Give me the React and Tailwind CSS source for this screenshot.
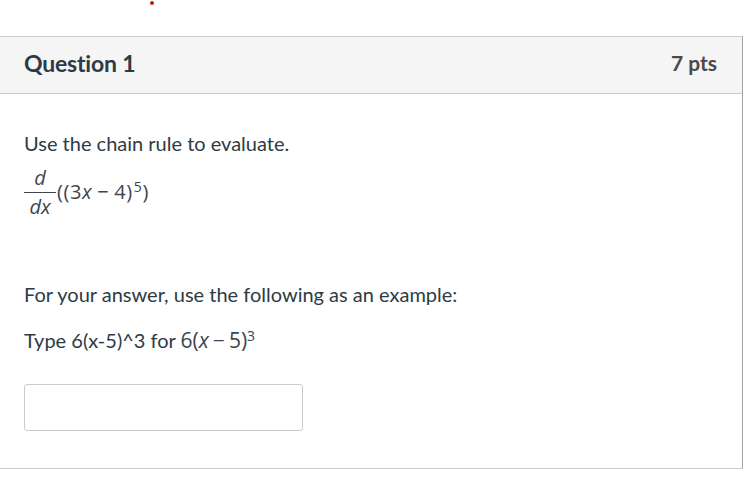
export default function App() {
  const font = { fontFamily: "Lato, 'Liberation Sans', sans-serif" };
  const mathFont = { fontFamily: "'Open Sans', 'DejaVu Sans', sans-serif" };
  return (
    <div className="relative h-[478px] w-[748px] overflow-hidden bg-white text-[#2d3b45]" style={font}>
      <div className="absolute left-[150px] top-[1px] h-[4px] w-[4px] rounded-full bg-[#c4161c]" />
      <div className="ml-[-1px] mt-[36px] w-[744px] border border-[#c7cdd1] border-r-[#a5a5a5]">
        <div className="flex h-[57px] items-center justify-between border-b border-[#c7cdd1] bg-[#f5f5f5] pb-[4px] pl-[24px] pr-[25px]">
          <h2 className="text-[23px] font-bold tracking-[-0.2px]">Question 1</h2>
          <span className="text-[21px] font-bold text-[#4a4a4a]">7 pts</span>
        </div>
        <div className="h-[374px] px-[24px] pt-[36px]">
          <p className="text-[20px] leading-[26px]">Use the chain rule to evaluate.</p>
          <div className="mt-[8px] flex items-center text-[20px] text-[#3a4750]" style={mathFont}>
            <div className="flex flex-col items-center leading-[28px]">
              <span className="italic">d</span>
              <span className="h-px w-[32px] bg-[#3a4750]" />
              <span className="italic">dx</span>
            </div>
            <span className="ml-[1px] mt-[-2px] tracking-[0.6px]">
              ((3<span className="italic">x</span>
              <span className="mx-[5px]">−</span>4)<sup className="ml-[1px] text-[14px]">5</sup>)
            </span>
          </div>
          <p className="mt-[60px] text-[20px] leading-[26px]">For your answer, use the following as an example:</p>
          <p className="mt-[20px] text-[20px] leading-[26px]">
            Type 6(x-5)^3 for{" "}
            <span className="text-[21px] text-[#3a4750]" style={mathFont}>
              6(<span className="italic">x</span>
              <span className="mx-[4px]">−</span>5)<sup className="text-[14px]">3</sup>
            </span>
          </p>
          <input
            type="text"
            className="mt-[31px] h-[47px] w-[279px] rounded-[3px] border border-[#c7cdd1] bg-white outline-none"
          />
        </div>
      </div>
    </div>
  );
}
